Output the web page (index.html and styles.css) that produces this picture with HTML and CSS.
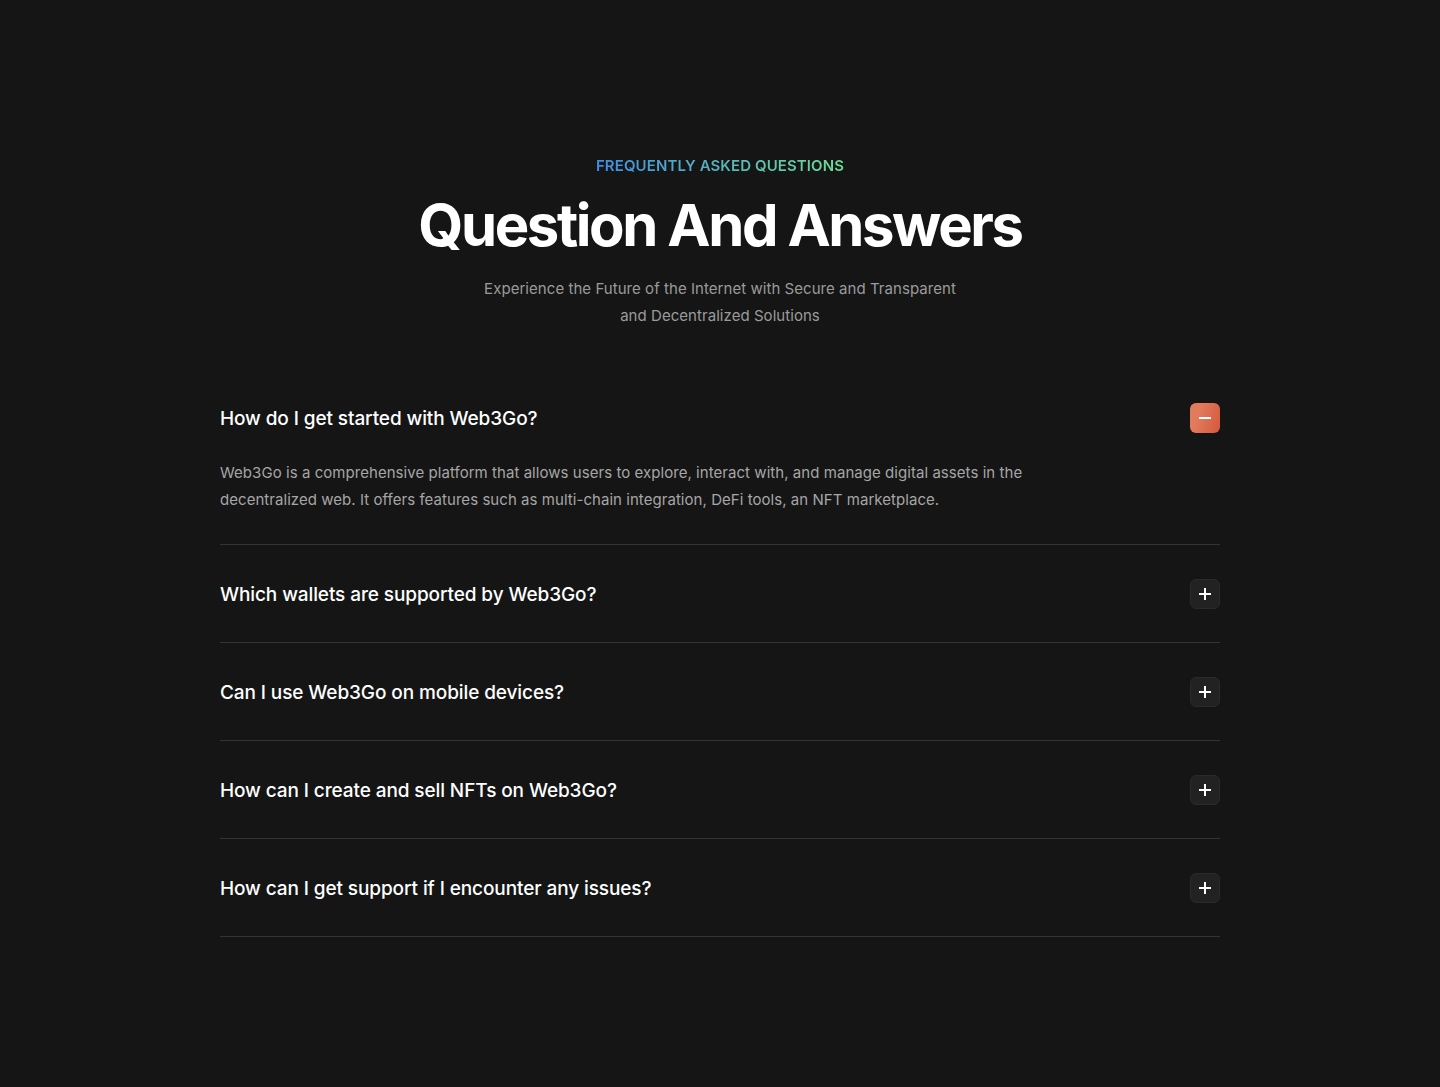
FILE: index.html
```html
<!DOCTYPE html>
<html lang="en">
<head>
  <meta charset="UTF-8">
  <meta name="viewport" content="width=device-width, initial-scale=1.0">
  <title>FAQ</title>
  <link rel="stylesheet" href="styles.css">
</head>
<body>
  <section class="faq">
    <div class="faq-head">
      <span class="eyebrow">FREQUENTLY ASKED QUESTIONS</span>
      <h1 class="title">Question And Answers</h1>
      <p class="sub">Experience the Future of the Internet with Secure and Transparent<br>and Decentralized Solutions</p>
    </div>
    <div class="list">
      <div class="item open">
        <div class="q">
          <span>How do I get started with Web3Go?</span>
          <button class="toggle"><svg viewBox="0 0 14 14" width="14" height="14"><path d="M1 7h12" stroke="#fff" stroke-width="2"/></svg></button>
        </div>
        <p class="a">Web3Go is a comprehensive platform that allows users to explore, interact with, and manage digital assets in the decentralized web. It offers features such as multi-chain integration, DeFi tools, an NFT marketplace.</p>
      </div>
      <div class="item">
        <div class="q">
          <span>Which wallets are supported by Web3Go?</span>
          <button class="toggle"><svg viewBox="0 0 14 14" width="14" height="14"><path d="M1 7h12M7 1v12" stroke="#fff" stroke-width="2"/></svg></button>
        </div>
      </div>
      <div class="item">
        <div class="q">
          <span>Can I use Web3Go on mobile devices?</span>
          <button class="toggle"><svg viewBox="0 0 14 14" width="14" height="14"><path d="M1 7h12M7 1v12" stroke="#fff" stroke-width="2"/></svg></button>
        </div>
      </div>
      <div class="item">
        <div class="q">
          <span>How can I create and sell NFTs on Web3Go?</span>
          <button class="toggle"><svg viewBox="0 0 14 14" width="14" height="14"><path d="M1 7h12M7 1v12" stroke="#fff" stroke-width="2"/></svg></button>
        </div>
      </div>
      <div class="item">
        <div class="q">
          <span>How can I get support if I encounter any issues?</span>
          <button class="toggle"><svg viewBox="0 0 14 14" width="14" height="14"><path d="M1 7h12M7 1v12" stroke="#fff" stroke-width="2"/></svg></button>
        </div>
      </div>
    </div>
  </section>
</body>
</html>
```
FILE: styles.css
```css
html, body{
  margin: 0;
  padding: 0;
  background-color: #151515;
  font-family: Inter, "Noto Sans", sans-serif;
  color: #fff;
}
.faq{
  width: 1000px;
  margin: 0 auto;
  padding: 156px 0 150px;
}
.faq-head{
  display: flex;
  flex-direction: column;
  align-items: center;
  text-align: center;
}
.eyebrow{
  font-size: 15px;
  font-weight: 600;
  line-height: 20px;
  letter-spacing: 0.1px;
  background: linear-gradient(90deg, #3f8ee6, #6fdc93);
  -webkit-background-clip: text;
  background-clip: text;
  color: transparent;
}
.title{
  margin: 14px 0 0;
  font-size: 58px;
  font-weight: 700;
  line-height: 70px;
  letter-spacing: -2.4px;
}
.sub{
  margin: 15px 0 0;
  font-size: 15px;
  line-height: 27px;
  color: #9b9b9b;
  letter-spacing: 0.05px;
}
.list{
  margin-top: 40px;
}
.item{
  padding: 34px 0 33px;
  border-bottom: 1px solid #333;
}
.item.open{
  padding-bottom: 31px;
}
.q{
  display: flex;
  justify-content: space-between;
  align-items: center;
  font-size: 19px;
  font-weight: 500;
  letter-spacing: -0.1px;
}
.toggle{
  width: 30px;
  height: 30px;
  border-radius: 6px;
  border: 1px solid #2a2a2a;
  background-color: #222;
  display: flex;
  align-items: center;
  justify-content: center;
  padding: 0;
  cursor: pointer;
}
.open .toggle{
  border: 0;
  background: linear-gradient(110deg, #e27a5e 30%, #d4583b);
}
.a{
  margin: 26px 0 0;
  max-width: 820px;
  font-size: 15px;
  line-height: 27px;
  color: #a6a6a6;
  letter-spacing: 0.05px;
}
```
